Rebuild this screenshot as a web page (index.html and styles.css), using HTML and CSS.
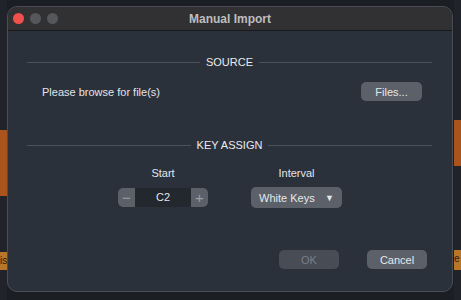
FILE: index.html
```html
<!DOCTYPE html>
<html lang="en">
<head>
    <meta charset="UTF-8">
    <title>Manual Import</title>
    <link rel="stylesheet" href="styles.css">
</head>
<body>
    <!-- Host app edges behind the dialog -->
    <div class="edge edge-left">
        <div class="clip clip-a"></div>
        <div class="clip clip-b">is</div>
    </div>

    <!-- Dialog window -->
    <div class="window">
        <div class="titlebar">
            <div class="lights">
                <span class="light red"></span>
                <span class="light"></span>
                <span class="light"></span>
            </div>
            <div class="title">Manual Import</div>
        </div>

        <div class="content">
            <div class="section-head"><span>SOURCE</span></div>
            <div class="source-row">
                <span class="hint">Please browse for file(s)</span>
                <button class="btn btn-files">Files...</button>
            </div>

            <div class="section-head head-keys"><span>KEY ASSIGN</span></div>
            <div class="keys-row">
                <div class="field field-start">
                    <label>Start</label>
                    <div class="stepper">
                        <button class="step">&minus;</button>
                        <span class="step-value">C2</span>
                        <button class="step">+</button>
                    </div>
                </div>
                <div class="field field-interval">
                    <label>Interval</label>
                    <div class="select">
                        <span>White Keys</span>
                        <span class="caret">&#9660;</span>
                    </div>
                </div>
            </div>

            <div class="actions">
                <button class="btn btn-wide" disabled>OK</button>
                <button class="btn btn-wide">Cancel</button>
            </div>
        </div>
    </div>

    <div class="edge edge-right">
        <div class="clip clip-c"></div>
        <div class="clip clip-d">e</div>
    </div>
</body>
</html>
```

FILE: styles.css
```css
/* General */
body {
    margin: 0;
    height: 300px;
    background-color: #1b1e23;
    font-family: 'Liberation Sans', Arial, sans-serif;
    color: #e4e6ea;
    display: flex;
    overflow: hidden;
}

button {
    font-family: inherit;
}

/* Background app strips */
.edge {
    width: 7px;
    flex-shrink: 0;
    background-color: #20242a;
}

.edge-left {
    padding-top: 130px;
}

.edge-right {
    margin-left: 1px;
    padding-top: 120px;
}

.clip {
    background-color: #a8541c;
    color: #2a1c10;
    font-size: 10px;
    line-height: 18px;
    overflow: hidden;
}

.clip-a {
    height: 66px;
}

.clip-b {
    margin-top: 56px;
    height: 18px;
    background-color: #b7762a;
}

.clip-c {
    height: 46px;
}

.clip-d {
    margin-top: 84px;
    height: 20px;
    background-color: #b7762a;
}

/* Window */
.window {
    width: 446px;
    height: 286px;
    margin-top: 6px;
    background-color: #2b313b;
    border: 1px solid #4a4d53;
    border-radius: 10px;
    box-sizing: border-box;
    overflow: hidden;
    display: flex;
    flex-direction: column;
}

.titlebar {
    height: 23px;
    background-color: #313133;
    border-bottom: 1px solid #17191d;
    display: flex;
    align-items: center;
    position: relative;
}

.lights {
    display: flex;
    gap: 6px;
    padding-left: 5px;
}

.light {
    width: 11px;
    height: 11px;
    border-radius: 50%;
    background-color: #55575b;
}

.light.red {
    background-color: #f0504c;
}

.title {
    position: absolute;
    left: 0;
    right: 0;
    text-align: center;
    font-size: 12px;
    font-weight: bold;
    color: #bdbdbf;
}

/* Content */
.content {
    flex: 1;
    padding: 0 20px 0 19px;
    display: flex;
    flex-direction: column;
}

.section-head {
    display: flex;
    align-items: center;
    gap: 6px;
    margin-top: 25px;
    font-size: 11px;
    color: #e9ebee;
}

.section-head::before,
.section-head::after {
    content: "";
    flex: 1;
    height: 1px;
    background-color: #4b505a;
}

.head-keys {
    margin-top: 38px;
}

.source-row {
    display: flex;
    align-items: center;
    justify-content: space-between;
    padding: 0 10px 0 15px;
    margin-top: 14px;
}

.hint {
    font-size: 11px;
    color: #e2e4e8;
}

.btn {
    height: 19px;
    padding: 0 10px;
    border: none;
    border-radius: 5px;
    background-color: #5c6169;
    color: #e6e7ea;
    font-size: 11px;
}

.btn-files {
    width: 61px;
}

.btn:disabled {
    background-color: #474c55;
    color: #7b7f86;
}

.btn-wide {
    width: 60px;
}

/* Key assign */
.keys-row {
    display: flex;
    margin-top: 16px;
}

.field {
    display: flex;
    flex-direction: column;
    align-items: center;
    gap: 9px;
    font-size: 11px;
}

.field-start {
    margin-left: 91px;
}

.field-interval {
    margin-left: 43px;
}

.stepper {
    display: flex;
    height: 19px;
    border-radius: 5px;
    overflow: hidden;
    background-color: #23272e;
}

.step {
    width: 17px;
    border: none;
    padding: 0;
    background-color: #5c6169;
    color: #9a9ea5;
    font-size: 15px;
    line-height: 19px;
}

.step-value {
    width: 56px;
    text-align: center;
    line-height: 19px;
    font-size: 11px;
}

.select {
    width: 91px;
    height: 21px;
    margin-top: -1px;
    box-sizing: border-box;
    padding: 0 8px;
    border-radius: 5px;
    background-color: #5c6169;
    display: flex;
    align-items: center;
    justify-content: space-between;
    color: #e6e7ea;
}

.caret {
    font-size: 9px;
}

/* Buttons */
.actions {
    display: flex;
    justify-content: flex-end;
    gap: 28px;
    margin-top: 42px;
    padding-right: 5px;
}
```
